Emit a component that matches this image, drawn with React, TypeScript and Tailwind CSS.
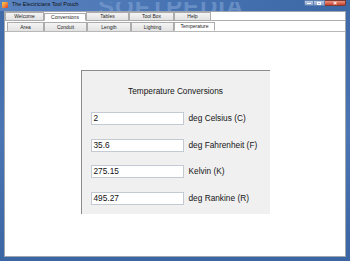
import React from "react";

type TabDef = { label: string; w: string; selected?: boolean };

const row1: TabDef[] = [
  { label: "Welcome", w: "w-[39px]" },
  { label: "Conversions", w: "w-[42px]", selected: true },
  { label: "Tables", w: "w-[43px]" },
  { label: "Tool Box", w: "w-[45px]" },
  { label: "Help", w: "w-[37px]" },
];

const row2: TabDef[] = [
  { label: "Area", w: "w-[37px]" },
  { label: "Conduit", w: "w-[43px]" },
  { label: "Length", w: "w-[44px]" },
  { label: "Lighting", w: "w-[43px]" },
  { label: "Temperature", w: "w-[41px]", selected: true },
];

const rows = [
  { value: "2", label: "deg Celsius (C)" },
  { value: "35.6", label: "deg Fahrenheit (F)" },
  { value: "275.15", label: "Kelvin (K)" },
  { value: "495.27", label: "deg Rankine (R)" },
];

function Tab({ t }: { t: TabDef }) {
  return (
    <div
      className={`${t.w} h-full flex items-center justify-center overflow-hidden border-t border-l border-r border-[#acacac] text-[5px] leading-[5px] text-[#1e1e1e] ${
        t.selected
          ? "bg-white -mb-px border-b border-b-white relative z-10"
          : "bg-gradient-to-b from-[#f4f4f4] to-[#e2e2e2]"
      }`}
    >
      <span className="block leading-[5px]">{t.label}</span>
    </div>
  );
}

export default function App() {
  return (
    <div
      className="w-[350px] h-[261px] flex flex-col overflow-hidden bg-gradient-to-b from-[#3f68a6] via-[#4a76b3] to-[#3b66a4]"
      style={{ fontFamily: '"Liberation Sans", Arial, sans-serif' }}
    >
      {/* Title bar */}
      <div className="h-[11px] relative flex items-start overflow-hidden bg-gradient-to-r from-[#5a84c0] via-[#4873b2] to-[#3d68a6]">
        <div className="absolute left-[98px] top-[2px] h-[9px] overflow-hidden text-[24px] leading-[10px] font-bold tracking-[1px] text-[#7fa2d4] opacity-60">
          SOFTPEDIA
        </div>
        <div className="relative flex items-center h-[10px] pl-[2px] gap-[4px]">
          <div className="w-[6px] h-[6px] bg-gradient-to-br from-[#f7d24a] to-[#e0322c] rounded-[1px]" />
          <span className="text-[5.3px] leading-none text-[#101010] tracking-[0.05px]">
            The Electricians Tool Pouch
          </span>
        </div>
        <div className="relative ml-auto mr-[4px] flex h-[6px]">
          <div className="w-[10px] h-full bg-gradient-to-b from-[#b9cbe4] to-[#8ea8cf] border border-[#5f7fae] rounded-bl-[2px] flex items-center justify-center">
            <div className="w-[4px] h-[1px] bg-white" />
          </div>
          <div className="w-[11px] h-full bg-gradient-to-b from-[#b9cbe4] to-[#8ea8cf] border-y border-r border-[#5f7fae] flex items-center justify-center">
            <div className="w-[4px] h-[3px] border border-white" />
          </div>
          <div className="w-[21px] h-full bg-gradient-to-b from-[#e89384] to-[#c9412c] border-y border-r border-[#7d3a30] rounded-br-[2px] flex items-center justify-center text-white text-[5px] leading-none font-bold">
            ✕
          </div>
        </div>
      </div>

      {/* Client area */}
      <div className="flex-1 mx-[4px] mb-[4px] border border-[#9fa6b0] bg-white flex flex-col">
        {/* Outer tabs */}
        <div className="h-[9px] flex items-end border-b border-[#acacac]">
          {row1.map((t) => (
            <Tab key={t.label} t={t} />
          ))}
        </div>
        {/* Inner tabs */}
        <div className="h-[10px] mt-[1px] flex pl-[2px] border-b border-[#b8b8b8]">
          {row2.map((t) => (
            <Tab key={t.label} t={t} />
          ))}
        </div>
        {/* Page */}
        <div className="flex-1 flex justify-center pt-[38px]">
          <div className="w-[189px] h-[144px] bg-[#f0f0f0] border-l border-t border-[#8c8c8c] flex flex-col pt-[15px] pl-[9px]">
            <div className="h-[10px] leading-[10px] text-[8.3px] text-[#151515] text-center pr-[9px]">
              Temperature Conversions
            </div>
            <div className="mt-[16px] flex flex-col gap-[13.5px]">
              {rows.map((r) => (
                <div key={r.label} className="flex items-center h-[13px]">
                  <div className="w-[93px] h-[13px] bg-white border border-[#c3cad4] flex items-center pl-[2px] text-[8.3px] leading-none text-[#111]">
                    {r.value}
                  </div>
                  <span className="ml-[5px] text-[8.3px] leading-none text-[#151515]">
                    {r.label}
                  </span>
                </div>
              ))}
            </div>
          </div>
        </div>
      </div>
    </div>
  );
}
